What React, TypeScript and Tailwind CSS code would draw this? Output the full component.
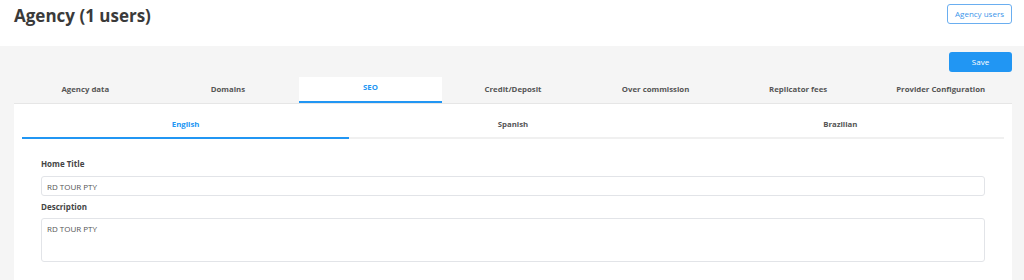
const tabs = ["Agency data", "Domains", "SEO", "Credit/Deposit", "Over commission", "Replicator fees", "Provider Configuration"];
const langs = ["English", "Spanish", "Brazilian"];

export default function App() {
    return (
        <div className="w-[1024px] h-[280px] overflow-hidden bg-[#f5f5f5] font-['Open_Sans',sans-serif]">
            <div className="h-[46px] bg-white flex justify-between items-start pl-[14px] pr-[12px]">
                <h1 className="mt-[2px] text-[17px] font-bold text-[#3a3a3a] leading-[28px]">Agency (1 users)</h1>
                <button className="mt-[4px] h-[20px] w-[65px] rounded-[3px] border border-[#6aaef0] text-[8px] text-[#3d95ea] bg-white">Agency users</button>
            </div>

            <div className="pl-[14px] pr-[12px]">
                <div className="flex justify-end pt-[6px]">
                    <button className="h-[20px] w-[63px] rounded-[3px] bg-[#2196f3] text-white text-[8px]">Save</button>
                </div>

                <div className="mt-[5px] grid grid-cols-7 h-[27px] border-b border-[#e6e6e6]">
                    {tabs.map((t) => (
                        <div
                            key={t}
                            className={
                                t === "SEO"
                                    ? "flex items-center justify-center bg-white border-b-2 border-[#2196f3] text-[7.8px] font-bold text-[#2196f3] pb-[2px]"
                                    : "flex items-center justify-center text-[7.8px] font-bold text-[#555]"
                            }
                        >
                            {t}
                        </div>
                    ))}
                </div>

                <div className="bg-white px-[8px] h-[200px]">
                    <div className="pt-[8px] grid grid-cols-3">
                        {langs.map((l) => (
                            <div
                                key={l}
                                className={
                                    l === "English"
                                        ? "h-[27px] flex items-center justify-center border-b-2 border-[#2196f3] text-[7.8px] font-bold text-[#2196f3]"
                                        : "h-[27px] flex items-center justify-center border-b-2 border-[#f0f0f0] text-[7.8px] font-bold text-[#555]"
                                }
                            >
                                {l}
                            </div>
                        ))}
                    </div>

                    <div className="px-[19px] pt-[19px]">
                        <label className="block text-[8px] font-bold text-[#444] leading-[12px]">Home Title</label>
                        <input
                            type="text"
                            defaultValue="RD TOUR PTY"
                            className="mt-[6px] block w-full h-[20px] px-[5px] border border-[#e2e4e8] rounded-[3px] text-[8px] text-[#555] outline-none"
                        />
                        <label className="mt-[5px] block text-[8px] font-bold text-[#444] leading-[12px]">Description</label>
                        <textarea
                            defaultValue="RD TOUR PTY"
                            className="mt-[5px] block w-full h-[44px] px-[5px] py-[4px] border border-[#e2e4e8] rounded-[3px] text-[8px] text-[#555] outline-none resize-none"
                        />
                    </div>
                </div>
            </div>
        </div>
    );
}
